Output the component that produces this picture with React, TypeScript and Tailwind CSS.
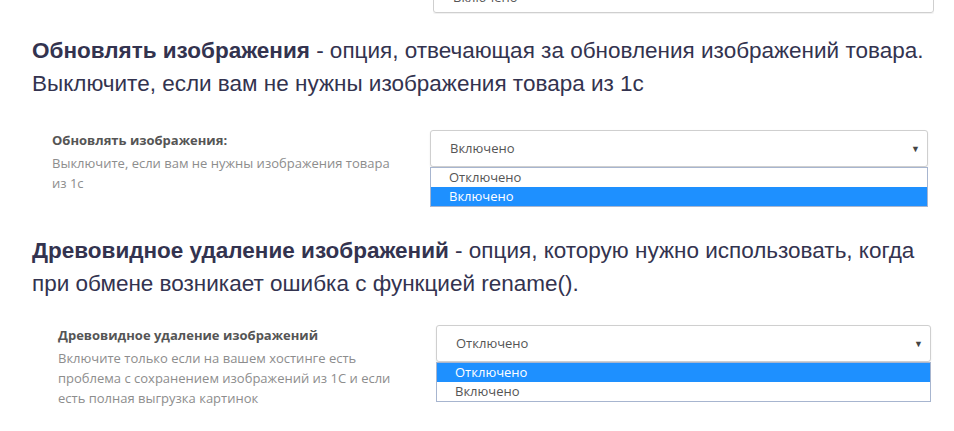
const arial = "font-['Liberation_Sans',Arial,sans-serif]";
const open = "font-['Open_Sans',sans-serif]";

type Opt = { label: string; active?: boolean };

const FakeSelect = ({ value, options }: { value: string; options: Opt[] }) => (
  <div className={`${open} flex-1`}>
    <div className="flex h-[37px] items-center justify-between rounded-[3px] border border-[#cfcfcf] bg-white pl-[19px] pr-[7px] text-[13px] text-[#555] shadow-[0_1px_2px_rgba(0,0,0,0.08)]">
      <span>{value}</span>
      <span className="text-[9px] text-[#444]">▼</span>
    </div>
    <div className="border border-[#a7b5cf] bg-white text-[13px] leading-[19px]">
      {options.map((o) => (
        <div
          key={o.label}
          className={
            o.active
              ? "bg-[#1e90ff] pl-[18px] text-white"
              : "pl-[18px] text-[#555]"
          }
        >
          {o.label}
        </div>
      ))}
    </div>
  </div>
);

export default function App() {
  return (
    <div className="h-[431px] w-[954px] overflow-hidden bg-white">
      {/* cut-off select from the previous shot */}
      <div className="ml-[433px] h-[14px] w-[501px] overflow-hidden">
        <div className={`${open} -mt-[18px] flex h-[31px] items-center rounded-[3px] border border-[#cfcfcf] pl-[19px] text-[13px] text-[#555] shadow-[0_1px_2px_rgba(0,0,0,0.08)]`}>
          Включено
        </div>
      </div>

      <p className={`${arial} ml-[32px] mt-[20px] text-[22.5px] leading-[33px] text-[#33334f]`}>
        <b>Обновлять изображения</b> - опция, отвечающая за обновления изображений товара.
        <br />
        Выключите, если вам не нужны изображения товара из 1с
      </p>

      <div className="ml-[52px] mt-[30px] flex gap-[40px] pr-[26px]">
        <div className={`${open} w-[338px] pt-[2px]`}>
          <div className="text-[13px] font-bold leading-[17px] text-[#555]">Обновлять изображения:</div>
          <div className="mt-[4px] text-[13px] leading-[20px] text-[#8d8d8d]">
            Выключите, если вам не нужны изображения товара из 1с
          </div>
        </div>
        <FakeSelect
          value="Включено"
          options={[{ label: "Отключено" }, { label: "Включено", active: true }]}
        />
      </div>

      <p className={`${arial} ml-[32px] mt-[27px] text-[22.5px] leading-[33px] text-[#33334f]`}>
        <b>Древовидное удаление изображений</b> - опция, которую нужно использовать, когда
        <br />
        при обмене возникает ошибка с функцией rename().
      </p>

      <div className="ml-[58px] mt-[25px] flex gap-[40px] pr-[23px]">
        <div className={`${open} w-[338px] pt-[2px]`}>
          <div className="text-[13px] font-bold leading-[17px] text-[#555]">Древовидное удаление изображений</div>
          <div className="mt-[4px] text-[13px] leading-[20px] text-[#8d8d8d]">
            Включите только если на вашем хостинге есть проблема с сохранением изображений из 1С и если есть полная выгрузка картинок
          </div>
        </div>
        <FakeSelect
          value="Отключено"
          options={[{ label: "Отключено", active: true }, { label: "Включено" }]}
        />
      </div>
    </div>
  );
}
